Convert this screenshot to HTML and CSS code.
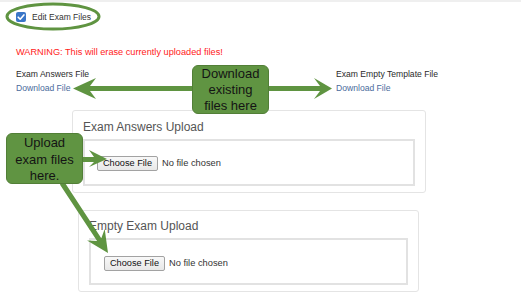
FILE: index.html
```html
<!DOCTYPE html>
<html lang="en">
<head>
<meta charset="utf-8">
<title>Edit Exam Files</title>
<link rel="stylesheet" href="styles.css">
</head>
<body>
<div class="topbar"></div>
<main class="page">
  <div class="toolbar">
    <span class="check">
      <svg width="10" height="10" viewBox="0 0 10 10"><path d="M2.2 5.2 L4.2 7.2 L7.9 2.9" fill="none" stroke="#fff" stroke-width="1.6" stroke-linecap="round" stroke-linejoin="round"/></svg>
    </span>
    <span class="toolbar-label">Edit Exam Files</span>
  </div>
  <p class="warning">WARNING: This will erase currently uploaded files!</p>
  <div class="files">
    <div class="file-col">
      <div class="file-label">Exam Answers File</div>
      <a class="file-link" href="#">Download File</a>
    </div>
    <div class="file-col">
      <div class="file-label">Exam Empty Template File</div>
      <a class="file-link" href="#">Download File</a>
    </div>
  </div>
  <section class="card card-answers">
    <h2 class="card-title">Exam Answers Upload</h2>
    <div class="upload">
      <button class="choose" type="button">Choose File</button>
      <span class="nofile">No file chosen</span>
    </div>
  </section>
  <section class="card card-empty">
    <h2 class="card-title">Empty Exam Upload</h2>
    <div class="upload">
      <button class="choose" type="button">Choose File</button>
      <span class="nofile">No file chosen</span>
    </div>
  </section>
</main>
<div class="annotations">
  <svg class="arrows" width="521" height="308" viewBox="0 0 521 308">
    <ellipse cx="53" cy="16.5" rx="46" ry="12.5" fill="none" stroke="#5f9441" stroke-width="3"/>
    <polygon fill="#5f9441" points="193,86 90,86 96,78 73,88.5 96,99 90,91 193,91"/>
    <polygon fill="#5f9441" points="268,86 320,86 314,78 332,88.5 314,99 320,91 268,91"/>
    <polygon fill="#5f9441" points="82,157 94,157 89,150 107,159 89,167 94,162 82,162"/>
    <polygon fill="#5f9441" points="64.1,181.6 101.3,238.2 104.7,228.9 108,253 87.1,240.4 97.1,241 59.9,184.4"/>
  </svg>
  <div class="callout callout-download">Download<br>existing<br>files here</div>
  <div class="callout callout-upload">Upload<br>exam files<br>here.</div>
</div>
</body>
</html>
```
FILE: styles.css
```css
* { box-sizing: border-box; }
html, body { margin: 0; padding: 0; background: #fff; }
body {
  position: relative;
  width: 521px;
  height: 308px;
  overflow: hidden;
  font-family: "Liberation Sans", Arial, sans-serif;
  color: #333;
}
.topbar { height: 2px; background: #efefef; }
.page { padding: 10px 0 0 16px; }
.toolbar { display: flex; align-items: center; gap: 6px; height: 10px; }
.check {
  width: 10px; height: 10px; border-radius: 2px;
  background: #3a76c8; display: flex;
}
.toolbar-label { font-size: 8.5px; line-height: 10px; color: #333; }
.warning {
  margin: 24px 0 0; font-size: 9.2px; line-height: 12px; color: #ff1a1a;
}
.files { display: grid; grid-template-columns: 320px auto; margin-top: 9px; }
.file-col { display: flex; flex-direction: column; align-items: flex-start; }
.file-label { font-size: 8.6px; line-height: 14px; color: #2a2a2a; }
.file-link { font-size: 8.6px; line-height: 14px; color: #4a6b9c; text-decoration: none; }
.card {
  border: 1px solid #e4e4e4;
  border-radius: 3px;
  padding: 8px 10px 6px;
}
.card-answers { margin: 15px 0 0 56px; width: 354px; height: 83px; }
.card-empty { margin: 17px 0 0 62px; width: 341px; height: 82px; padding-top: 7px; }
.card-title {
  margin: 0 0 4px; font-size: 12px; line-height: 16px; font-weight: normal; color: #555;
}
.upload {
  height: 47px;
  border: 2px solid #e2e2e2;
  display: flex; align-items: flex-start;
  padding: 15px 0 0 12px;
}
.card-empty .upload { padding: 16px 0 0 13px; }
.choose {
  height: 15px; width: 61px; padding: 0;
  font-family: inherit; font-size: 9.2px; line-height: 13px; color: #111;
  background: linear-gradient(#f8f8f8, #e8e8e8);
  border: 1px solid #a2a2a2; border-radius: 2px;
}
.nofile { margin-left: 4px; font-size: 9.3px; line-height: 15px; color: #333; }
.annotations { position: absolute; left: 0; top: 0; width: 521px; height: 308px; pointer-events: none; }
.arrows { position: absolute; left: 0; top: 0; }
.callout {
  position: absolute;
  background: #609442;
  border: 1px solid #527f37;
  border-radius: 6px;
  color: #141414;
  font-size: 13px;
  text-align: center;
}
.callout-download { left: 192px; top: 65px; width: 77px; height: 49px; line-height: 16px; }
.callout-upload { left: 6px; top: 133px; width: 77px; height: 51px; line-height: 16.5px; padding-top: 1px; }
```
